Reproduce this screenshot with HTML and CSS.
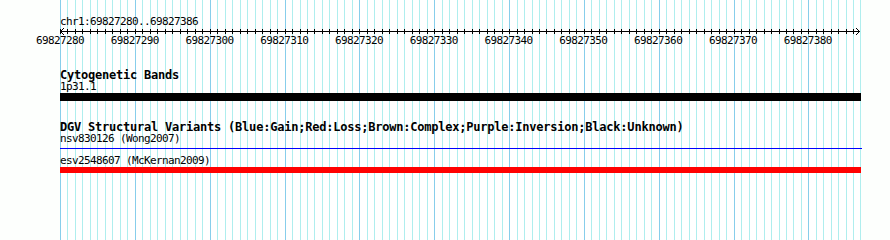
FILE: index.html
```html
<!DOCTYPE html>
<html>

<head>
  <meta charset="utf-8" />
  <title>chr1:69827280..69827386</title>
  <link rel="stylesheet" href="styles.css">
</head>

<body>
  <div class="panel">
    <!-- grid lines + ruler ticks, one column per base -->
    <div class="grid-lines">
      <div class="cols js-cols"></div>
      <div class="col-end"></div>
    </div>

    <div class="tracks">
      <div class="small ruler-title">chr1:69827280..69827386</div>
      <div class="axis">
        <svg width="801" height="7" viewBox="0 0 801 7">
          <line x1="0" y1="3.5" x2="800" y2="3.5" stroke="#000" stroke-width="1" />
          <polyline points="4,0 0.5,3.5 4,7" fill="none" stroke="#000" stroke-width="1" />
          <polyline points="796,0 799.5,3.5 796,7" fill="none" stroke="#000" stroke-width="1" />
        </svg>
      </div>
      <div class="small labels">
        <span>69827280</span>
        <span>69827290</span>
        <span>69827300</span>
        <span>69827310</span>
        <span>69827320</span>
        <span>69827330</span>
        <span>69827340</span>
        <span>69827350</span>
        <span>69827360</span>
        <span>69827370</span>
        <span>69827380</span>
      </div>

      <div class="track">
        <div class="track-title">Cytogenetic Bands</div>
        <div class="small">1p31.1</div>
        <div class="band-bar"></div>
      </div>

      <div class="track">
        <div class="track-title">DGV Structural Variants (Blue:Gain;Red:Loss;Brown:Complex;Purple:Inversion;Black:Unknown)</div>
        <div class="small">nsv830126 (Wong2007)</div>
        <div class="gain-line"></div>
        <div class="small variant-label">esv2548607 (McKernan2009)</div>
        <div class="loss-bar"></div>
      </div>
    </div>
  </div>

  <script type="text/javascript">
    // 107 bases in view, a major line every 10 bases
    const cols = document.querySelector(".js-cols");
    for (let i = 0; i < 107; i++) {
      const col = document.createElement("div");
      col.className = i % 10 === 0 ? "col major" : "col";
      cols.appendChild(col);
    }
  </script>
</body>

</html>
```

FILE: styles.css
```css
html,
body {
  margin: 0;
  background: #fdfffd;
  color: black;
}

.panel {
  display: grid;
  width: 890px;
  height: 240px;
  overflow: hidden;
}

.grid-lines,
.tracks {
  grid-area: 1 / 1;
}

.grid-lines {
  display: flex;
  padding-left: 60px;
}

.cols {
  display: flex;
  width: 800px;
  background: white;
}

.col {
  flex: 1 1 0;
  min-width: 0;
  border-left: 1px solid #afeeee;
}

.col.major {
  border-left-color: #87ceeb;
}

/* ruler tick */
.col::before {
  content: '';
  display: block;
  width: 1px;
  height: 5px;
  margin-top: 29px;
  margin-left: -1px;
  background: black;
}

.col-end {
  width: 1px;
  background: #afeeee;
}

.tracks {
  padding: 16px 0 0 60px;
}

.small {
  font: 11px/11px "DejaVu Sans Mono", monospace;
  letter-spacing: -0.62px;
  white-space: nowrap;
}

.ruler-title {
  margin-bottom: 1px;
}

.axis {
  height: 7px;
}

.axis svg {
  display: block;
  overflow: visible;
}

.labels {
  display: flex;
  margin-left: -37.38px;
}

.labels span {
  flex: 0 0 calc(800px / 10.7);
  text-align: center;
}

.track {
  margin-top: 23px;
}

.track + .track {
  margin-top: 20px;
}

.track-title {
  font: bold 12px/12px "DejaVu Sans Mono", monospace;
  letter-spacing: -0.22px;
  white-space: nowrap;
}

.track-title + .small {
  margin-top: 0;
}

.band-bar {
  width: 801px;
  height: 8px;
  margin-top: 1px;
  background: black;
}

.gain-line {
  width: 802px;
  height: 1px;
  margin-top: 4px;
  background: #0000ff;
}

.variant-label {
  margin-top: 6px;
}

.loss-bar {
  width: 801px;
  height: 6px;
  margin-top: 1px;
  background: #ff0000;
}
```
